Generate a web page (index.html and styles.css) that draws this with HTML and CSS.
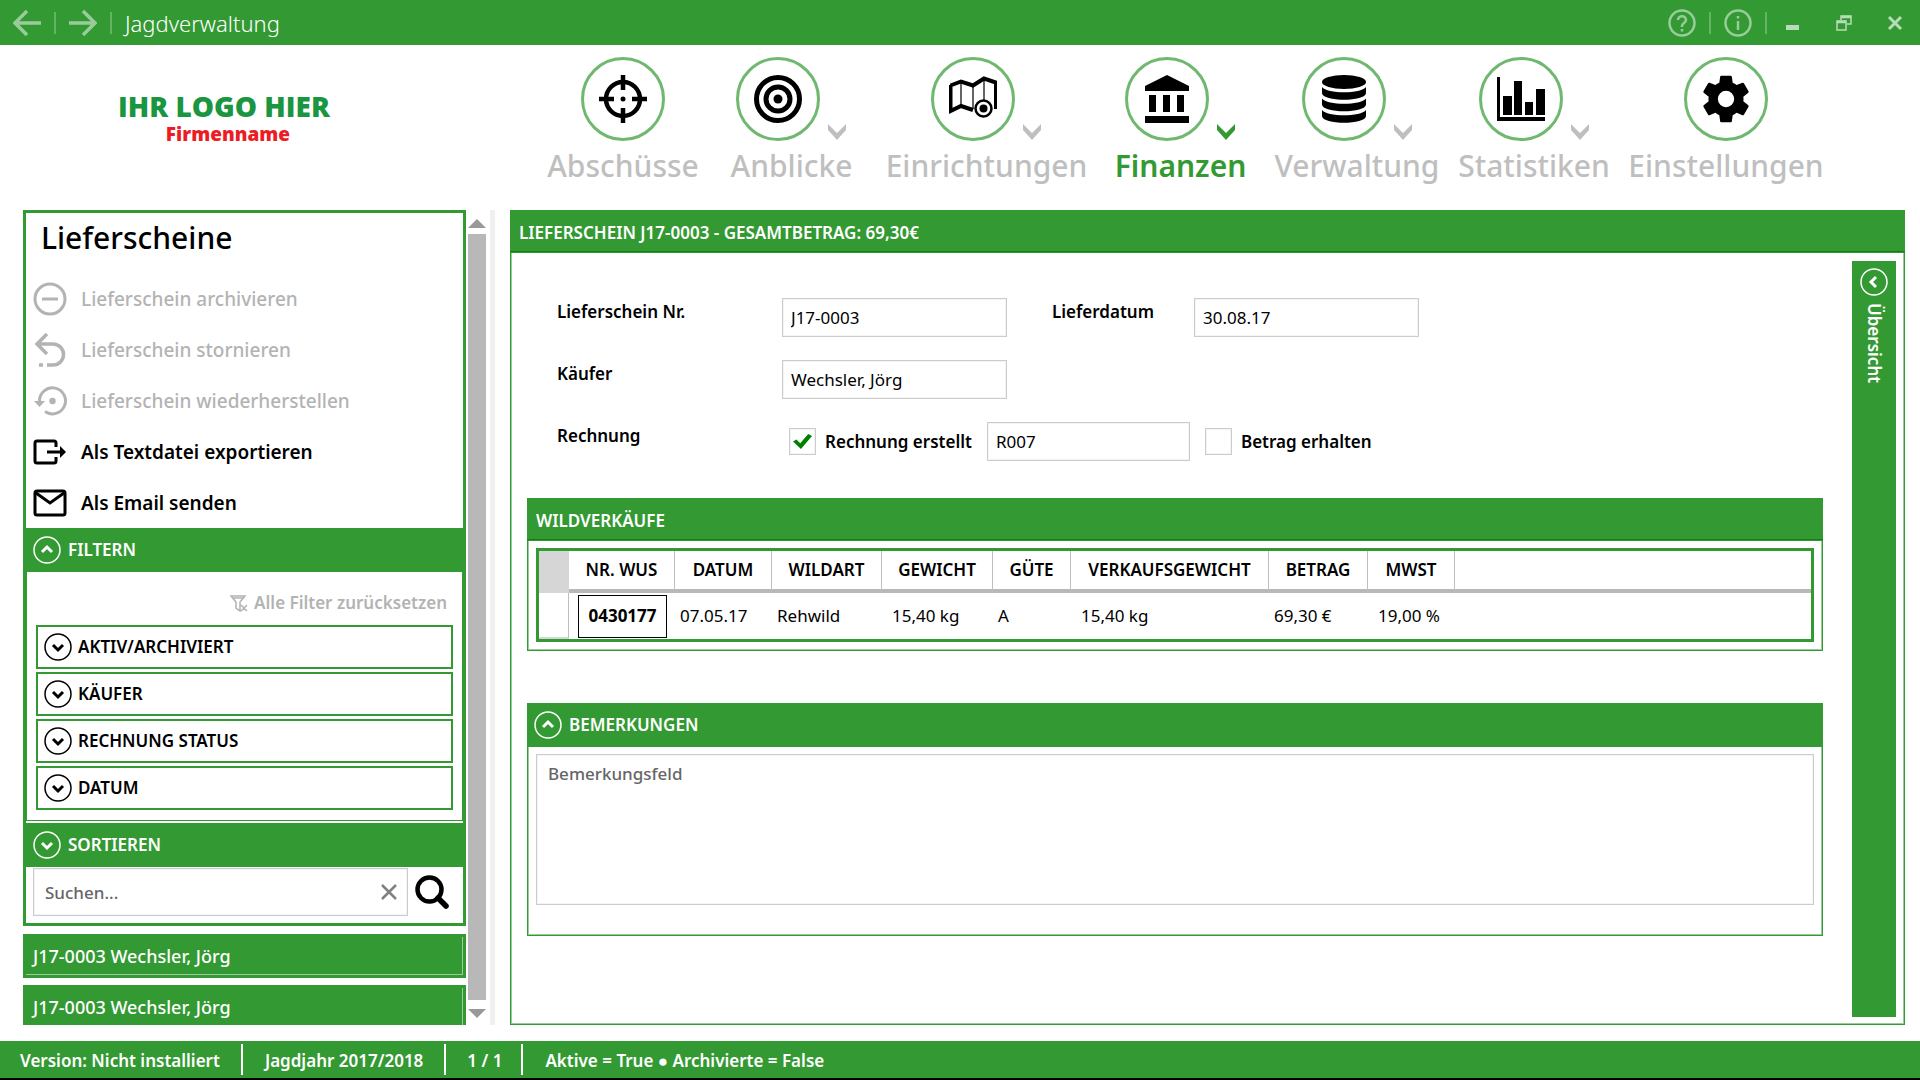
FILE: index.html
```html
<!DOCTYPE html>
<html lang="de">
<head>
<meta charset="utf-8">
<title>Jagdverwaltung</title>
<link rel="stylesheet" href="styles.css">
</head>
<body>
<svg class="defs" aria-hidden="true">
  <symbol id="i-circle-down" viewBox="0 0 28 28"><circle cx="14" cy="14" r="13" fill="none" stroke="currentColor" stroke-width="1.5"/><path d="M9 12l5 5 5-5" fill="none" stroke="currentColor" stroke-width="3"/></symbol>
  <symbol id="i-circle-up" viewBox="0 0 28 28"><circle cx="14" cy="14" r="13" fill="none" stroke="currentColor" stroke-width="1.5"/><path d="M9 16l5-5 5 5" fill="none" stroke="currentColor" stroke-width="3"/></symbol>
  <symbol id="i-circle-left" viewBox="0 0 28 28"><circle cx="14" cy="14" r="13" fill="none" stroke="currentColor" stroke-width="1.5"/><path d="M16 9l-5 5 5 5" fill="none" stroke="currentColor" stroke-width="3"/></symbol>
  <symbol id="i-chevron" viewBox="0 0 20 16"><path d="M1 0l9 9 9-9v6l-9 10-9-10z" fill="currentColor"/></symbol>
</svg>

<header class="titlebar">
  <button class="tb-btn" aria-label="Zurück"><svg width="28" height="28" viewBox="0 0 28 28"><path d="M28 14H3M14 2L2 14l12 12" fill="none" stroke="currentColor" stroke-width="3.500"/></svg></button>
  <span class="tb-sep"></span>
  <button class="tb-btn" aria-label="Vorwärts"><svg width="28" height="28" viewBox="0 0 28 28"><path d="M0 14h25M14 2l12 12-12 12" fill="none" stroke="currentColor" stroke-width="3.500"/></svg></button>
  <span class="tb-sep"></span>
  <h1 class="app-title">Jagdverwaltung</h1>
  <div class="tb-right">
    <button class="tb-btn" aria-label="Hilfe"><svg width="28" height="28" viewBox="0 0 28 28" fill="none" stroke="currentColor" stroke-width="2.500"><circle cx="14" cy="14" r="12.5"/><path d="M10 11c0-5 8-5 8 0 0 3-4 3-4 6v1"/><path d="M14 20v2.500"/></svg></button>
    <span class="tb-sep"></span>
    <button class="tb-btn" aria-label="Info"><svg width="28" height="28" viewBox="0 0 28 28" fill="none" stroke="currentColor" stroke-width="2.500"><circle cx="14" cy="14" r="12.5"/><path d="M14 12v9M14 7v2.500"/></svg></button>
    <span class="tb-sep"></span>
    <button class="tb-btn win first" aria-label="Minimieren"><svg width="16" height="16" viewBox="0 0 16 16"><path d="M1 10h13v5H1z" fill="currentColor"/></svg></button>
    <button class="tb-btn win" aria-label="Wiederherstellen"><svg width="16" height="16" viewBox="0 0 16 16" fill="none" stroke="currentColor"><path d="M5 5V1h10v8h-4" stroke-width="1.500"/><path d="M5 2h10" stroke-width="2.500"/><path d="M1 6h9v9H1z" stroke-width="1.500"/><path d="M1 7h9" stroke-width="2.500"/></svg></button>
    <button class="tb-btn win" aria-label="Schließen"><svg width="16" height="16" viewBox="0 0 16 16"><path d="M2 2l12 12M14 2L2 14" stroke="currentColor" stroke-width="3"/></svg></button>
  </div>
</header>

<div class="top">
  <div class="logo"><span class="logo-main">IHR LOGO HIER</span><span class="logo-sub">Firmenname</span></div>
  <nav class="nav">
    <a class="nav-item" href="#"><span class="nav-row"><span class="ring"><svg width="48" height="48" viewBox="0 0 48 48"><circle cx="24" cy="24" r="17" fill="none" stroke="#000" stroke-width="4.500"/><circle cx="24" cy="24" r="2.500"/><path d="M24 0v15M24 33v15M0 24h15M33 24h15" stroke="#000" stroke-width="4.500"/></svg></span></span><span>Abschüsse</span></a>
    <a class="nav-item" href="#"><span class="nav-row"><span class="ring"><svg width="48" height="48" viewBox="0 0 48 48" fill="none" stroke="#000"><circle cx="24" cy="24" r="21.500" stroke-width="5"/><circle cx="24" cy="24" r="12" stroke-width="5"/><circle cx="24" cy="24" r="4.500" fill="#000" stroke="none"/></svg></span><svg class="chev"><use href="#i-chevron"/></svg></span><span>Anblicke</span></a>
    <a class="nav-item" href="#"><span class="nav-row"><span class="ring"><svg width="48" height="48" viewBox="0 0 48 48" fill="none" stroke="#000"><path d="M1.500 10.500l10.500-4 12 4 11-7 12 4V34M1.500 10v26l10.500-5 12 4" stroke-width="4"/><path d="M12 7v24M24 10v24M35 4v24" stroke-width="1.200"/><circle cx="34.500" cy="33.500" r="8" fill="#fff" stroke-width="2.500"/><circle cx="34.500" cy="33.500" r="4" fill="#000" stroke="none"/></svg></span><svg class="chev"><use href="#i-chevron"/></svg></span><span>Einrichtungen</span></a>
    <a class="nav-item active" href="#"><span class="nav-row"><span class="ring"><svg width="48" height="48" viewBox="0 0 48 48"><path d="M24 0l22 11v5H2v-5zM6 20h7v17H6zM20 20h7v17h-7zM34 20h7v17h-7zM2 41h44v7H2z"/></svg></span><svg class="chev"><use href="#i-chevron"/></svg></span><span>Finanzen</span></a>
    <a class="nav-item" href="#"><span class="nav-row"><span class="ring"><svg width="48" height="48" viewBox="0 0 48 48"><ellipse cx="24" cy="7" rx="22" ry="7"/><path d="M2 12c5 7 39 7 44 0v6c0 9-44 9-44 0zM2 23.500c5 7 39 7 44 0v6c0 9-44 9-44 0zM2 35c5 7 39 7 44 0v6c0 9-44 9-44 0z"/></svg></span><svg class="chev"><use href="#i-chevron"/></svg></span><span>Verwaltung</span></a>
    <a class="nav-item" href="#"><span class="nav-row"><span class="ring"><svg width="48" height="48" viewBox="0 0 48 48"><path d="M0 2h3v40h45v4H0zM6 21h9v19H6zM17 6h8v34h-8zM28 27h8v13h-8zM39 14h9v26h-9z"/></svg></span><svg class="chev"><use href="#i-chevron"/></svg></span><span>Statistiken</span></a>
    <a class="nav-item" href="#"><span class="nav-row"><span class="ring"><svg width="56" height="56" viewBox="0 0 24 24"><path d="M12 15.500A3.500 3.500 0 0 1 8.500 12 3.500 3.500 0 0 1 12 8.500a3.500 3.500 0 0 1 3.500 3.500 3.500 3.500 0 0 1-3.500 3.500m7.430-2.530c.04-.32.07-.64.07-.97s-.03-.66-.07-1l2.110-1.630c.19-.15.24-.42.12-.64l-2-3.460c-.12-.22-.39-.31-.61-.22l-2.490 1c-.52-.39-1.060-.73-1.690-.98l-.37-2.650A.506.506 0 0 0 14 2h-4c-.25 0-.46.18-.5.420l-.37 2.650c-.63.25-1.170.59-1.690.98l-2.490-1c-.22-.09-.49 0-.61.22l-2 3.460c-.13.22-.07.49.12.64L4.570 11c-.04.34-.07.67-.07 1s.03.65.07.97l-2.110 1.660c-.19.15-.25.42-.12.64l2 3.460c.12.22.39.3.61.22l2.490-1.010c.52.4 1.060.74 1.690.99l.37 2.650c.04.24.25.42.5.42h4c.25 0 .46-.18.5-.42l.37-2.650c.63-.26 1.170-.59 1.690-.99l2.490 1.010c.22.08.49 0 .61-.22l2-3.460c.12-.22.07-.49-.12-.64z"/></svg></span></span><span>Einstellungen</span></a>
  </nav>
</div>

<div class="work">
  <div class="side">
    <aside class="side-content">
      <section class="box">
        <h2 class="box-title">Lieferscheine</h2>
        <button class="action" disabled><svg viewBox="0 0 34 34" fill="none" stroke="currentColor" stroke-width="3"><circle cx="17" cy="17" r="15"/><path d="M9 17h16"/></svg>Lieferschein archivieren</button>
        <button class="action" disabled><svg viewBox="0 0 34 34" fill="none" stroke="currentColor" stroke-width="3.500"><path d="M4 11h16a10 10 0 0 1 0 21h-6M10 32H6M14 1L4 11l10 10"/></svg>Lieferschein stornieren</button>
        <button class="action" disabled><svg viewBox="0 0 34 34" fill="none" stroke="currentColor" stroke-width="3"><path d="M6.500 17A13 13 0 1 1 12 27.500"/><path d="M1 17h11l-5.500 6z" fill="currentColor" stroke="none"/><circle cx="19.500" cy="17" r="3.200" fill="currentColor" stroke="none"/></svg>Lieferschein wiederherstellen</button>
        <button class="action"><svg viewBox="0 0 34 34" fill="none" stroke="currentColor" stroke-width="3"><path d="M23 12V8q0-2-2-2H4Q2 6 2 8v18q0 2 2 2h17q2 0 2-2v-4M14 17h15"/><path d="M27 11l6 6-6 6z" fill="currentColor" stroke="none"/></svg>Als Textdatei exportieren</button>
        <button class="action"><svg viewBox="0 0 34 34" fill="none" stroke="currentColor" stroke-width="3"><rect x="2" y="5" width="30" height="24" rx="2"/><path d="M3 7l14 10L31 7"/></svg>Als Email senden</button>

        <button class="group-head"><svg class="circ"><use href="#i-circle-up"/></svg>FILTERN</button>
        <div class="filters">
          <button class="reset" disabled><svg width="18" height="18" viewBox="0 0 18 18" fill="none" stroke="currentColor" stroke-width="1.500"><path d="M1 2h14l-5 6v9l-4-3V8zM3 4h10M11 11l6 6M17 11l-6 6"/></svg>Alle Filter zurücksetzen</button>
          <button class="filter"><svg class="circ"><use href="#i-circle-down"/></svg>AKTIV/ARCHIVIERT</button>
          <button class="filter"><svg class="circ"><use href="#i-circle-down"/></svg>KÄUFER</button>
          <button class="filter"><svg class="circ"><use href="#i-circle-down"/></svg>RECHNUNG STATUS</button>
          <button class="filter"><svg class="circ"><use href="#i-circle-down"/></svg>DATUM</button>
        </div>
        <button class="group-head"><svg class="circ"><use href="#i-circle-down"/></svg>SORTIEREN</button>
        <div class="search">
          <div class="search-field">
            <input type="text" placeholder="Suchen..." aria-label="Suchen">
            <button class="clear" aria-label="Leeren"><svg width="18" height="18" viewBox="0 0 18 18"><path d="M2 2l14 14M16 2L2 16" stroke="currentColor" stroke-width="2.500"/></svg></button>
          </div>
          <button class="search-btn" aria-label="Suche starten"><svg width="34" height="34" viewBox="0 0 34 34" fill="none" stroke="currentColor"><circle cx="14.500" cy="14.500" r="12" stroke-width="4.500"/><path d="M23 23l8 8" stroke-width="5.500" stroke-linecap="round"/></svg></button>
        </div>
      </section>
      <a class="entry" href="#">J17-0003 Wechsler, Jörg</a>
      <a class="entry" href="#">J17-0003 Wechsler, Jörg</a>
    </aside>
    <div class="scroll" aria-hidden="true">
      <svg width="18" height="10" viewBox="0 0 18 10"><path d="M0 10L9 1l9 9z" fill="currentColor"/></svg>
      <span class="thumb"></span>
      <svg width="18" height="10" viewBox="0 0 18 10"><path d="M0 0l9 9 9-9z" fill="currentColor"/></svg>
    </div>
  </div>

  <main class="panel">
    <h2 class="panel-head">LIEFERSCHEIN J17-0003 - GESAMTBETRAG: 69,30€</h2>
    <div class="panel-body">
      <div class="content">
        <form class="form">
          <div class="row">
            <label class="lab" for="nr">Lieferschein Nr.</label><input class="field" id="nr" type="text" value="J17-0003">
            <label class="lab second" for="dat">Lieferdatum</label><input class="field" id="dat" type="text" value="30.08.17">
          </div>
          <div class="row">
            <label class="lab" for="kf">Käufer</label><input class="field" id="kf" type="text" value="Wechsler, Jörg">
          </div>
          <div class="row">
            <span class="lab">Rechnung</span>
            <label class="check"><input type="checkbox" checked>Rechnung erstellt</label>
            <input class="field narrow" type="text" value="R007" aria-label="Rechnungsnummer">
            <label class="check"><input type="checkbox">Betrag erhalten</label>
          </div>
        </form>

        <section class="card">
          <h3 class="panel-head">WILDVERKÄUFE</h3>
          <div class="card-body">
            <table class="grid">
              <colgroup><col class="c0"><col class="c1"><col class="c2"><col class="c3"><col class="c4"><col class="c5"><col class="c6"><col class="c7"><col class="c8"><col></colgroup>
              <thead><tr><th class="corner"></th><th>NR. WUS</th><th>DATUM</th><th>WILDART</th><th>GEWICHT</th><th>GÜTE</th><th>VERKAUFSGEWICHT</th><th>BETRAG</th><th>MWST</th><th></th></tr></thead>
              <tbody><tr><td class="rowhead"></td><td class="pick"><button>0430177</button></td><td>07.05.17</td><td>Rehwild</td><td class="wide">15,40 kg</td><td>A</td><td class="wide">15,40 kg</td><td>69,30 €</td><td class="wide">19,00 %</td><td></td></tr></tbody>
            </table>
          </div>
        </section>

        <section class="card">
          <button class="group-head"><svg class="circ"><use href="#i-circle-up"/></svg>BEMERKUNGEN</button>
          <div class="card-body notes"><textarea placeholder="Bemerkungsfeld" aria-label="Bemerkungen"></textarea></div>
        </section>
      </div>
      <button class="overview"><svg class="circ"><use href="#i-circle-left"/></svg><span>Übersicht</span></button>
    </div>
  </main>
</div>

<footer class="status">
  <span>Version: Nicht installiert</span>
  <span>Jagdjahr 2017/2018</span>
  <span>1 / 1</span>
  <span>Aktive = True ● Archivierte = False</span>
</footer>
</body>
</html>
```
FILE: styles.css
```css
:root {
  --green: #339933;
  --green-dark: #118011;
  --green-soft: #99cc99;
  --ring: #70b870;
  --mute: #b3b3b3;
  --line: #cccccc;
}

* { box-sizing: border-box; }

body {
  margin: 0;
  height: 100vh;
  display: flex;
  flex-direction: column;
  background: #fff;
  color: #000;
  font: 600 17px/24px "Noto Sans", "Open Sans", sans-serif;
}

h1, h2, h3 { margin: 0; }
a { color: inherit; text-decoration: none; }

button {
  font: inherit;
  color: inherit;
  background: none;
  border: 0;
  padding: 0;
  text-align: left;
}

input, textarea {
  font: inherit;
  font-weight: 400;
  color: #000;
  background: #fff;
  border: 1px solid var(--line);
  border-radius: 0;
  box-shadow: inset 0 0 0 1px #f4f4f4;
}

::placeholder { color: #666; opacity: 1; font-weight: 500; }
svg { flex: none; display: block; }
.defs { position: absolute; width: 0; height: 0; }
.circ { width: 28px; height: 28px; }

/* Title bar */
.titlebar {
  flex: none;
  height: 45px;
  display: flex;
  align-items: center;
  gap: 13px;
  padding: 0 17px 0 13px;
  background: var(--green);
  color: #fff;
}
.tb-btn { color: var(--green-soft); }
.tb-sep { width: 2px; height: 22px; background: #66b366; }
.app-title { font-size: 22px; font-weight: 300; line-height: 30px; }
.tb-right { margin-left: auto; display: flex; align-items: center; gap: 13px; }
.win { width: 32px; color: #b8dcb8; margin-right: 6px; }
.win.first { width: 21px; }
.win svg { margin-left: auto; }
.win:last-child { margin-right: 0; }

/* Logo and main navigation */
.top {
  flex: none;
  display: flex;
  justify-content: space-between;
  height: 165px;
  padding: 12px 94px 0 118px;
}
.logo {
  display: flex;
  flex-direction: column;
  align-items: center;
  padding-top: 33px;
  font-family: "Open Sans", sans-serif;
  font-weight: 800;
  white-space: nowrap;
}
.logo-main { font-size: 28px; line-height: 32px; color: #1a9641; }
.logo-sub { font-size: 19px; line-height: 24px; color: #ed1c24; padding-left: 8px; }
.nav {
  display: grid;
  grid-template-columns: 152px 145px 205px 143px 170px 144px 200px;
  gap: 20px;
}
.nav-item {
  display: flex;
  flex-direction: column;
  align-items: center;
  font-size: 30px;
  font-weight: 500;
  line-height: 50px;
  white-space: nowrap;
  color: #bfbfbf;
}
.nav-item.active { color: var(--green); font-weight: 600; }
.nav-row { display: flex; align-items: flex-end; gap: 7px; }
.ring {
  width: 84px;
  height: 84px;
  display: flex;
  align-items: center;
  justify-content: center;
  border: 3px solid var(--ring);
  border-radius: 50%;
}
.chev { width: 20px; height: 16px; margin-bottom: 1px; }

/* Work area */
.work {
  flex: 1;
  min-height: 0;
  display: flex;
  padding: 0 15px 16px 23px;
}
.side {
  flex: none;
  width: 472px;
  display: flex;
  border-right: 5px solid #f0f0f0;
}
.side-content { width: 443px; overflow: hidden; }
.box {
  border: 3px solid var(--green);
  padding-bottom: 7px;
}
.box-title {
  padding: 4px 15px 0;
  font-size: 30px;
  font-weight: 500;
  line-height: 42px;
  margin-bottom: 14px;
}
.action {
  display: flex;
  align-items: center;
  gap: 14px;
  width: 100%;
  height: 51px;
  padding-left: 7px;
  font-size: 19px;
}
.action:disabled { font-weight: 500; }
.action svg { width: 34px; height: 34px; }
button:disabled { color: var(--mute); }
.group-head {
  display: flex;
  align-items: center;
  gap: 7px;
  width: 100%;
  height: 44px;
  padding-left: 7px;
  background: var(--green);
  color: #fff;
}
.filters {
  display: flex;
  flex-direction: column;
  gap: 3px;
  padding: 13px 9px 10px 9px;
  margin-bottom: 2px;
  border: 1px solid var(--green);
  border-top: 0;
}
.reset {
  display: flex;
  align-items: center;
  align-self: flex-end;
  gap: 6px;
  margin: 0 6px 2px 0;
  height: 35px;
}
.filter {
  display: flex;
  align-items: center;
  gap: 6px;
  height: 44px;
  padding-left: 6px;
  border: 2px solid var(--green);
}
.search { display: flex; align-items: center; padding: 1px 7px 0; gap: 7px; }
.search-field { position: relative; flex: none; width: 375px; }
.search-field input { width: 100%; height: 48px; padding: 0 40px 0 11px; display: block; }
.clear { position: absolute; right: 10px; top: 15px; color: #808080; }
.entry {
  display: flex;
  align-items: center;
  height: 44px;
  margin-top: 7px;
  padding-left: 7px;
  background: var(--green);
  border: 3px solid var(--green);
  box-shadow: inset -1px -1px 0 var(--green-soft);
  color: #fff;
  font-size: 18px;
  font-weight: 500;
}
.box + .entry { margin-top: 8px; }
.scroll {
  display: flex;
  flex-direction: column;
  align-items: center;
  gap: 6px;
  width: 18px;
  margin-left: 2px;
  padding: 8px 0 6px;
  color: #999;
}
.thumb { flex: 1; width: 18px; background: #b8b8b8; }
.scroll svg:last-child { margin-top: 3px; }

/* Document panel */
.panel {
  flex: 1;
  min-width: 0;
  margin-left: 15px;
  display: flex;
  flex-direction: column;
}
.panel-head {
  flex: none;
  height: 43px;
  padding: 0 9px;
  font: inherit;
  line-height: 45px;
  color: #fff;
  background: var(--green);
  box-shadow: inset 0 -1px 0 var(--green), inset 0 -2px 0 var(--green-dark);
}
.panel-body {
  flex: 1;
  min-height: 0;
  display: flex;
  border: 1px solid var(--green);
  border-top: 0;
  box-shadow: inset 1px -1px 0 var(--green-soft), inset -1px 0 0 var(--green-soft);
  padding: 8px 8px 7px 16px;
}
.content { flex: 1; min-width: 0; margin-right: 29px; }
.form {
  display: flex;
  flex-direction: column;
  gap: 22px;
  padding: 37px 0 0 30px;
}
.row { display: flex; align-items: flex-start; height: 40px; }
.lab { width: 225px; padding-top: 2px; }
.lab.second { width: 142px; margin-left: 45px; }
.field { width: 225px; height: 39px; padding: 0 8px; }
.field.narrow { width: 203px; margin: 0 15px; }
.check { display: flex; align-items: center; gap: 9px; height: 39px; }
.lab + .check { padding-left: 7px; }
.check input {
  appearance: none;
  width: 27px;
  height: 27px;
  margin: 0;
}
.check input:checked { display: grid; place-items: center; }
.check input:checked::before {
  content: "";
  width: 19px;
  height: 15px;
  background: #008000;
  clip-path: polygon(0 50%, 18% 36%, 38% 62%, 80% 0, 100% 14%, 42% 100%);
}

.card { margin-top: 36px; }
.card + .card { margin-top: 52px; }
.card-body {
  border: 1px solid var(--green);
  border-top: 0;
  box-shadow: inset 1px -1px 0 var(--green-soft), inset -1px 0 0 var(--green-soft);
  padding: 7px 8px 8px;
}
.grid {
  width: 100%;
  border: 3px solid var(--green);
  border-spacing: 0;
  table-layout: fixed;
}
.c0 { width: 30px; }
.c1 { width: 106px; }
.c2 { width: 97px; }
.c3 { width: 110px; }
.c4 { width: 111px; }
.c5 { width: 78px; }
.c6 { width: 198px; }
.c7 { width: 99px; }
.c8 { width: 87px; }
.grid th {
  height: 42px;
  padding: 0;
  font-weight: 600;
  border-right: 1px solid #bfbfbf;
  border-bottom: 4px solid #b8b8b8;
}
.grid th:last-child { border-right: 0; }
.grid th.corner { background: #d6d6d6; border-color: #d6d6d6; }
.grid td {
  height: 46px;
  padding: 0 0 0 5px;
  font-weight: 400;
  white-space: nowrap;
}
.grid td.wide { padding-left: 10px; }
.grid td.rowhead { border-right: 1px solid #bfbfbf; border-bottom: 2px solid #d6d6d6; }
.grid td.pick { padding: 0 8px 0 9px; }
.pick button {
  width: 100%;
  height: 43px;
  display: block;
  border: 1px solid #000;
  text-align: center;
  font-weight: 700;
}
.notes { padding-bottom: 30px; }
.notes textarea {
  display: block;
  width: 100%;
  height: 151px;
  padding: 7px 11px;
  resize: none;
}
.overview {
  flex: none;
  width: 44px;
  display: flex;
  flex-direction: column;
  align-items: center;
  gap: 7px;
  padding-top: 7px;
  background: var(--green);
  color: #fff;
}
.overview span { writing-mode: vertical-rl; }

/* Status bar */
.status {
  flex: none;
  display: flex;
  align-items: center;
  height: 39px;
  background: var(--green);
  border-bottom: 2px solid #000;
  color: #fff;
}
.status span {
  padding: 4px 21px 2px 22px;
  line-height: 25px;
  white-space: nowrap;
}
.status span:first-child { padding-left: 20px; }
.status span:nth-child(3) { padding: 4px 19px 2px 21px; }
.status span + span { border-left: 2px solid #fff; }
```
